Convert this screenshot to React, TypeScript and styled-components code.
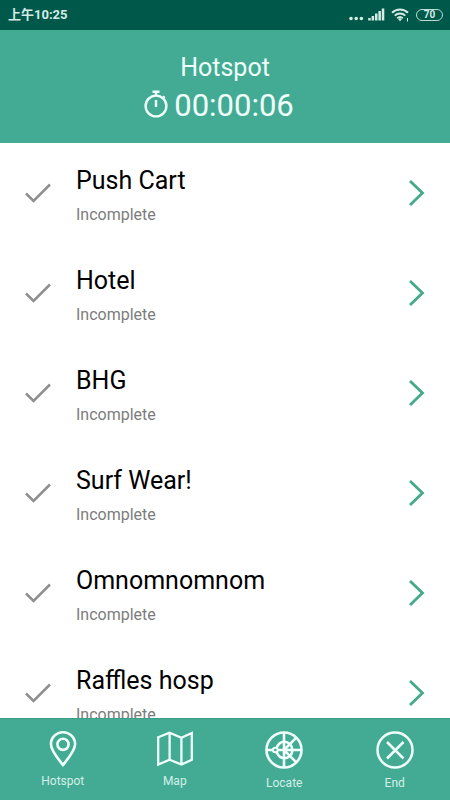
import React from "react";
import styled, { createGlobalStyle } from "styled-components";

const GlobalStyle = createGlobalStyle`
  *, *::before, *::after { box-sizing: border-box; }
  body { margin: 0; background: #ffffff; font-family: Roboto, "Noto Sans CJK SC", sans-serif; }
  button { font: inherit; color: inherit; border: 0; padding: 0; margin: 0; background: none; cursor: pointer; }
`;

const Screen = styled.div`
  display: flex;
  flex-direction: column;
  height: 100vh;
  background: #ffffff;
`;

const StatusBar = styled.div`
  display: flex;
  flex: none;
  align-items: center;
  justify-content: space-between;
  height: 30px;
  padding: 0 7px 0 8px;
  background: #00584a;
  color: #d5ece6;
`;

const Clock = styled.time`
  font-size: 13px;
  line-height: 16px;
  font-weight: 700;
`;

const StatusIcons = styled.div`
  display: flex;
  align-items: center;
  gap: 6px;
`;

const Battery = styled.span`
  display: flex;
  align-items: center;
  justify-content: center;
  width: 27px;
  height: 12px;
  border: 1px solid #b9dcd3;
  border-radius: 6px;
  font-size: 10px;
  line-height: 10px;
  font-weight: 700;
`;

const Header = styled.header`
  display: flex;
  flex: none;
  flex-direction: column;
  align-items: center;
  gap: 3px;
  padding: 21px 16px 19px;
  background: #43ab94;
  color: #f0fffb;
`;

const Title = styled.h1`
  margin: 0;
  font-size: 25px;
  line-height: 34px;
  font-weight: 400;
`;

const Timer = styled.div`
  display: flex;
  align-items: center;
  gap: 6px;
  padding-right: 12px;
  font-size: 31px;
  line-height: 36px;
`;

const List = styled.ul`
  flex: 1;
  min-height: 0;
  margin: 0;
  padding: 0;
  list-style: none;
  overflow-y: auto;
  scrollbar-width: none;
`;

const Row = styled.button`
  display: flex;
  align-items: center;
  width: 100%;
  height: 100px;
  padding: 0 24px;
  text-align: left;
`;

const RowText = styled.span`
  display: flex;
  flex: 1;
  flex-direction: column;
  gap: 8px;
  padding: 4px 0 0 24px;
`;

const RowName = styled.span`
  font-size: 25px;
  line-height: 32px;
  color: #000000;
`;

const RowState = styled.span`
  font-size: 16px;
  line-height: 20px;
  color: #7c7c7c;
`;

const NavBar = styled.nav`
  display: flex;
  flex: none;
  align-items: flex-start;
  justify-content: space-around;
  height: 81px;
  padding: 12px 0 0 5px;
  background: #43ab94;
  box-shadow: 0 -1px 0 #3c9c87;
  color: #f0fffb;
`;

const NavItem = styled.button`
  display: flex;
  flex-direction: column;
  align-items: center;
  gap: 6px;
`;

const NavLabel = styled.span`
  font-size: 12px;
  line-height: 16px;
  color: #d3efe8;
`;

const Icon = styled.svg`
  display: block;
  flex: none;
  fill: none;
  stroke: currentColor;
`;

const RowCheck = styled(Icon)`
  color: #8f8f8f;
`;

const RowChevron = styled(Icon)`
  color: #43ab8c;
`;

const SignalIcon = () => (
  <Icon width="37" height="16" viewBox="0 0 37 16" aria-hidden="true">
    <g fill="currentColor" stroke="none">
      <circle cx="3" cy="11.5" r="1.8" />
      <circle cx="8.2" cy="11.5" r="1.8" />
      <circle cx="13.4" cy="11.5" r="1.8" />
      <rect x="20.2" y="11" width="2.5" height="2.5" />
      <rect x="23.6" y="9" width="2.5" height="4.5" />
      <rect x="27" y="6.5" width="2.5" height="7" />
      <rect x="30.4" y="4" width="2.5" height="9.5" />
      <rect x="33.8" y="1.5" width="2.5" height="12" />
    </g>
  </Icon>
);

const WifiIcon = () => (
  <Icon width="19" height="16" viewBox="0 0 19 16" strokeWidth="1.9" aria-hidden="true">
    <path d="M1 5.8a11.5 11.5 0 0 1 16 0M3.7 8.6a7.8 7.8 0 0 1 10.6 0M6.2 11.2a4.2 4.2 0 0 1 5.6 0" />
    <path d="M7.2 12.2 9 14.2l1.8-2a2.6 2.6 0 0 0-3.6 0z" fill="currentColor" stroke="none" />
    <path d="M16.5 11v3.5" strokeWidth="1" />
  </Icon>
);

const StopwatchIcon = () => (
  <Icon width="24" height="32" viewBox="0 0 24 32" strokeWidth="2.4" aria-hidden="true">
    <circle cx="12" cy="16" r="10.4" />
    <path d="M8.5 1.7h7M12 2v4M12 10v7M19.2 7.8l1.4-1.4" />
  </Icon>
);

const PinIcon = () => (
  <Icon width="28" height="36" viewBox="0 0 28 36" strokeWidth="2.6" aria-hidden="true">
    <path d="M14 34C10.5 29.5 1.9 20.3 1.9 13.1a12.1 11.8 0 0 1 24.2 0C26.1 20.3 17.5 29.5 14 34z" />
    <circle cx="14" cy="13.3" r="5.6" />
  </Icon>
);

const MapIcon = () => (
  <Icon width="36" height="36" viewBox="0 0 36 36" strokeWidth="2.3" aria-hidden="true">
    <path d="M1.2 6.3 12.6 1.8 24.4 6.8 34.8 2v26.8L24.4 33.6 12.6 28.7 1.2 33.6zM12.6 1.8v26.9M24.4 6.8v26.8" />
  </Icon>
);

const LocateIcon = () => (
  <Icon width="38" height="38" viewBox="0 0 38 38" strokeWidth="2.6" aria-hidden="true">
    <circle cx="19" cy="19" r="17.5" />
    <path d="M19 1.5v35M1.5 19h6.5M12.5 19h24M19 19 31.3 6.7M19 19l12.3 12.3" />
    <path d="M11.5 17.2C13 13.300 15.800 10.800 19.200 10.800a8.200 8.200 0 0 1 0 16.400C15.800 27.200 13 24.700 11.500 20.800" />
    <circle cx="10.3" cy="19" r="2.3" strokeWidth="2" />
  </Icon>
);

const EndIcon = () => (
  <Icon width="38" height="38" viewBox="0 0 38 38" strokeWidth="2.5" aria-hidden="true">
    <circle cx="19" cy="19" r="17.5" />
    <path d="M11 11l16.5 16.5M27.5 11 11 27.5" />
  </Icon>
);

const stops = ["Push Cart", "Hotel", "BHG", "Surf Wear!", "Omnomnomnom", "Raffles hosp"];

const tabs = [
  { label: "Hotspot", Glyph: PinIcon },
  { label: "Map", Glyph: MapIcon },
  { label: "Locate", Glyph: LocateIcon },
  { label: "End", Glyph: EndIcon },
];

export default function App() {
  return (
    <Screen>
      <GlobalStyle />
      <StatusBar>
        <Clock>上午10:25</Clock>
        <StatusIcons>
          <SignalIcon />
          <WifiIcon />
          <Battery>70</Battery>
        </StatusIcons>
      </StatusBar>
      <Header>
        <Title>Hotspot</Title>
        <Timer>
          <StopwatchIcon />
          <span>00:00:06</span>
        </Timer>
      </Header>
      <List>
        {stops.map((name) => (
          <li key={name}>
            <Row type="button">
              <RowCheck width="28" height="20" viewBox="0 0 28 20" strokeWidth="2.5" aria-hidden="true">
                <path d="M2 10.5 9.5 18 26 1.5" />
              </RowCheck>
              <RowText>
                <RowName>{name}</RowName>
                <RowState>Incomplete</RowState>
              </RowText>
              <RowChevron width="18" height="28" viewBox="0 0 18 28" strokeWidth="2.8" aria-hidden="true">
                <path d="M2 2l12.5 12L2 26" />
              </RowChevron>
            </Row>
          </li>
        ))}
      </List>
      <NavBar>
        {tabs.map(({ label, Glyph }) => (
          <NavItem key={label} type="button">
            <Glyph />
            <NavLabel>{label}</NavLabel>
          </NavItem>
        ))}
      </NavBar>
    </Screen>
  );
}
